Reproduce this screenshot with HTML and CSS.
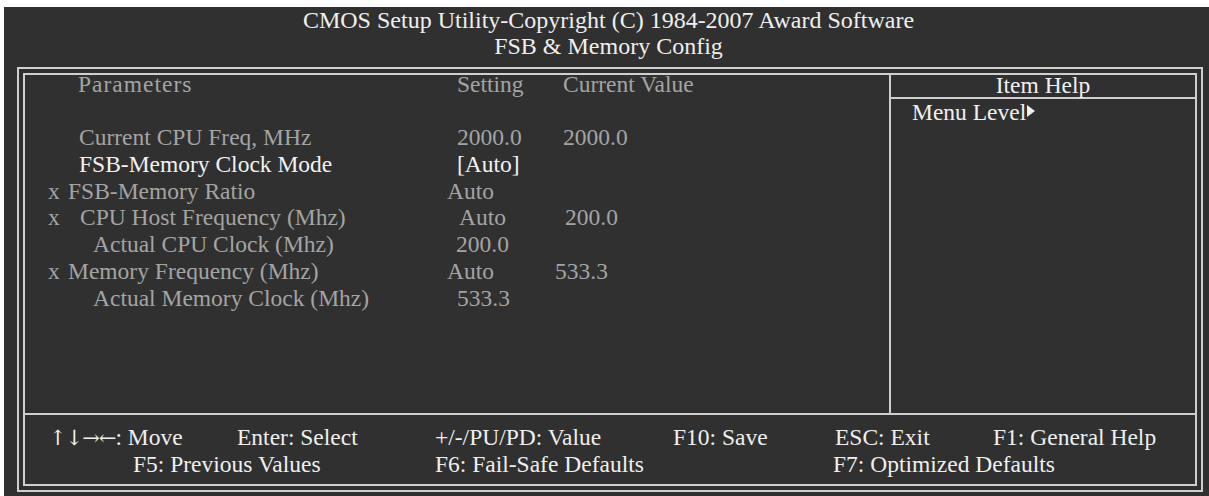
FILE: index.html
```html
<!DOCTYPE html>
<html>
<head>
<meta charset="utf-8">
<title>FSB &amp; Memory Config</title>
<link rel="stylesheet" href="styles.css">
</head>
<body>
<div class="screen">
  <header class="title">
    <div>CMOS Setup Utility-Copyright (C) 1984-2007 Award Software</div>
    <div>FSB &amp; Memory Config</div>
  </header>
  <div class="frame">
    <div class="box">
      <div class="top">
        <div class="params">
          <div class="row">
            <div class="name head-name">Parameters</div>
            <div class="set s10">Setting</div>
            <div class="val v8">Current Value</div>
          </div>
          <div class="row"></div>
          <div class="row">
            <div class="name n54">Current CPU Freq, MHz</div>
            <div class="set s10">2000.0</div>
            <div class="val v8">2000.0</div>
          </div>
          <div class="row active">
            <div class="name n54">FSB-Memory Clock Mode</div>
            <div class="set s10">[Auto]</div>
            <div class="val"></div>
          </div>
          <div class="row">
            <div class="name n23"><span class="mark m20">x</span>FSB-Memory Ratio</div>
            <div class="set">Auto</div>
            <div class="val"></div>
          </div>
          <div class="row">
            <div class="name n23"><span class="mark m32">x</span>CPU Host Frequency (Mhz)</div>
            <div class="set s12">Auto</div>
            <div class="val v10">200.0</div>
          </div>
          <div class="row">
            <div class="name n68">Actual CPU Clock (Mhz)</div>
            <div class="set s9">200.0</div>
            <div class="val"></div>
          </div>
          <div class="row">
            <div class="name n23"><span class="mark m20">x</span>Memory Frequency (Mhz)</div>
            <div class="set">Auto</div>
            <div class="val">533.3</div>
          </div>
          <div class="row">
            <div class="name n68">Actual Memory Clock (Mhz)</div>
            <div class="set s10">533.3</div>
            <div class="val"></div>
          </div>
        </div>
        <aside class="help">
          <div class="help-head">Item Help</div>
          <div class="help-body">Menu Level<svg class="tri" width="8" height="12" viewBox="0 0 8 12"><polygon points="0,0 8,6 0,12" fill="#f0f0f0"/></svg></div>
        </aside>
      </div>
      <div class="keys">
        <div class="k c1"><span class="arrows">↑↓→←</span>: Move</div>
        <div class="k c3">Enter: Select</div>
        <div class="k c4">+/-/PU/PD: Value</div>
        <div class="k c5">F10: Save</div>
        <div class="k c6">ESC: Exit</div>
        <div class="k c7">F1: General Help</div>
        <div class="k r2 c2">F5: Previous Values</div>
        <div class="k r2 c4">F6: Fail-Safe Defaults</div>
        <div class="k r2 c6 shift">F7: Optimized Defaults</div>
      </div>
    </div>
  </div>
</div>
</body>
</html>
```

FILE: styles.css
```css
body {
  margin: 0;
  background: #ffffff;
}

.screen {
  margin: 7px 0 0 4px;
  width: 1205px;
  height: 489px;
  background: #303030;
  font-family: "Liberation Serif", "Times New Roman", serif;
  color: #efefef;
  overflow: hidden;
}

.title {
  font-size: 24px;
  line-height: 26px;
  text-align: center;
  padding-left: 4px;
  height: 52px;
  white-space: nowrap;
}

.frame {
  margin: 8px 0 0 13px;
  width: 1186px;
  height: 425px;
  box-sizing: border-box;
  border: 2px solid #cfcfcf;
  padding: 4px;
}

.box {
  height: 100%;
  box-sizing: border-box;
  border: 2px solid #cfcfcf;
  display: flex;
  flex-direction: column;
}

.top {
  display: flex;
  height: 338px;
  flex: none;
}

.params {
  flex: 1;
  margin-top: -4px;
  font-size: 23.5px;
  line-height: 26.7px;
  color: #a4a4a4;
}

.row {
  display: grid;
  grid-template-columns: 422px 108px 1fr;
  height: 26.7px;
  white-space: nowrap;
}

.row.active {
  color: #f2f2f2;
}

.name {
  display: flex;
}

.head-name {
  padding-left: 53px;
  letter-spacing: 1px;
}

.n54 { padding-left: 54px; }
.n23 { padding-left: 23px; }
.n68 { padding-left: 68px; }

.mark { display: inline-block; }
.m20 { width: 20px; }
.m32 { width: 32px; }

.s9 { padding-left: 9px; }
.s10 { padding-left: 10px; }
.s12 { padding-left: 12px; }

.v8 { padding-left: 8px; }
.v10 { padding-left: 10px; }

.help {
  width: 306px;
  flex: none;
  box-sizing: border-box;
  border-left: 2px solid #cfcfcf;
  font-size: 23.5px;
  color: #f0f0f0;
}

.help-head {
  text-align: center;
  line-height: 20px;
  padding-bottom: 2px;
  border-bottom: 2px solid #cfcfcf;
}

.help-body {
  padding-left: 21px;
  line-height: 26px;
  white-space: nowrap;
}

.tri {
  vertical-align: 3px;
  margin-left: 1px;
}

.keys {
  flex: 1;
  border-top: 2px solid #cfcfcf;
  padding: 8.5px 0 0 24px;
  display: grid;
  grid-template-columns: 84px 104px 198px 238px 162px 158px 1fr;
  grid-auto-rows: 27px;
  align-content: start;
  font-size: 23.5px;
  line-height: 27px;
  color: #efefef;
  white-space: nowrap;
}

.arrows {
  font-family: "DejaVu Serif", serif;
  font-size: 21px;
  letter-spacing: -1px;
}

.k { grid-row: 1; }
.k.r2 { grid-row: 2; }

.c1 { grid-column: 1 / span 2; }
.c2 { grid-column: 2 / span 2; }
.c3 { grid-column: 3; }
.c4 { grid-column: 4 / span 1; }
.r2.c4 { grid-column: 4 / span 2; }
.c5 { grid-column: 5; }
.c6 { grid-column: 6; }
.r2.c6 { grid-column: 6 / span 2; }
.c7 { grid-column: 7; }

.shift { margin-left: -2px; }
```
